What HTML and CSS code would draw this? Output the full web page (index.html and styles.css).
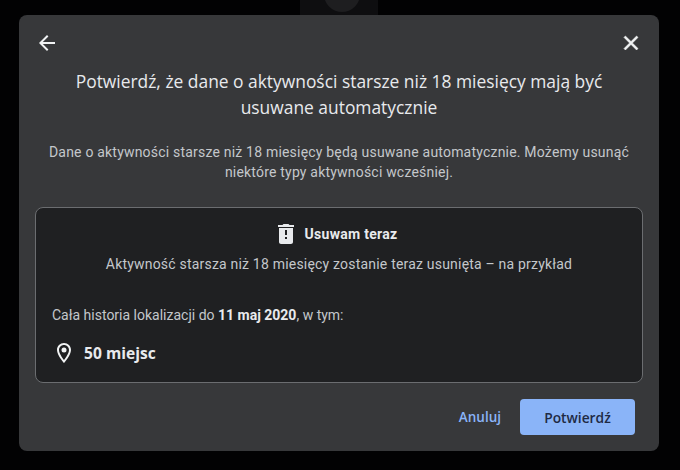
FILE: index.html
```html
<!DOCTYPE html>
<html lang="pl">
<head>
    <meta charset="UTF-8">
    <title>Potwierdź</title>
    <link rel="stylesheet" href="styles.css">
</head>
<body>

<div class="backdrop"><div class="backdrop-dot"></div></div>

<div class="dialog">
    <div class="top-bar">
        <svg class="top-icon" viewBox="0 0 24 24"><path d="M20 11H7.830l5.590-5.590L12 4l-8 8 8 8 1.410-1.410L7.830 13H20v-2z"/></svg>
        <svg class="top-icon" viewBox="0 0 24 24"><path d="M19 6.410L17.590 5 12 10.590 6.410 5 5 6.410 10.590 12 5 17.590 6.410 19 12 13.410 17.590 19 19 17.590 13.410 12z" stroke="#f1f3f4" stroke-width=".6"/></svg>
    </div>
    <h1 class="title">Potwierdź, że dane o aktywności starsze niż 18 miesięcy mają być usuwane automatycznie</h1>
    <p class="intro">Dane o aktywności starsze niż 18 miesięcy będą usuwane automatycznie. Możemy usunąć niektóre typy aktywności wcześniej.</p>

    <div class="card">
        <div class="card-head">
            <svg class="trash" viewBox="0 0 24 24"><path d="M15.500 3l-1-1h-5l-1 1H4v2h16V3h-4.500zM5 6v14c0 1.100.9 2 2 2h10c1.100 0 2-.9 2-2V6H5zm8 11h-2v-2h2v2zm0-4h-2V8h2v5z"/></svg>
            <span>Usuwam teraz</span>
        </div>
        <div class="card-sub">Aktywność starsza niż 18 miesięcy zostanie teraz usunięta – na przykład</div>
        <div class="history">Cała historia lokalizacji do <b>11 maj 2020</b>, w tym:</div>
        <div class="place">
            <svg class="pin" viewBox="0 0 24 24"><path d="M12 2C8.130 2 5 5.130 5 9c0 5.250 7 13 7 13s7-7.750 7-13c0-3.870-3.130-7-7-7zm0 17.000C9.900 16.300 7 12 7 9c0-2.760 2.240-5 5-5s5 2.240 5 5c0 3-2.900 7.300-5 10z"/><circle cx="12" cy="9" r="2.500"/></svg>
            <span>50 miejsc</span>
        </div>
    </div>

    <div class="actions">
        <span class="cancel">Anuluj</span>
        <span class="confirm">Potwierdź</span>
    </div>
</div>

</body>
</html>
```

FILE: styles.css
```css
html, body {
    margin: 0;
    height: 100%;
}
body {
    background-color: #020203;
    font-family: Roboto, "Liberation Sans", sans-serif;
    padding: 15px 21px 19px 19px;
    box-sizing: border-box;
    position: relative;
}
/* what shows of the page behind the dialog */
.backdrop {
    position: absolute;
    top: 0;
    left: 300px;
    width: 78px;
    height: 15px;
    background-color: #0e0e10;
    overflow: hidden;
}
.backdrop-dot {
    width: 36px;
    height: 36px;
    margin: -24px 0 0 24px;
    border-radius: 50%;
    background-color: #1e1e20;
}
.dialog {
    position: relative;
    height: 436px;
    box-sizing: border-box;
    background-color: #37383a;
    border-radius: 8px;
    padding: 16px 16px 0;
    display: flex;
    flex-direction: column;
}
.top-bar {
    display: flex;
    justify-content: space-between;
    height: 24px;
}
.top-icon {
    width: 24px;
    height: 24px;
    fill: #f1f3f4;
}
.title {
    margin: 13px 0 0;
    padding: 0 40px;
    font-family: "Open Sans", sans-serif;
    font-size: 17.4px;
    font-weight: 400;
    line-height: 26px;
    color: #e8eaed;
    text-align: center;
}
.intro {
    margin: 22px 0 0;
    padding: 0 8px;
    font-size: 14px;
    letter-spacing: .2px;
    line-height: 20px;
    color: #c4c7cb;
    text-align: center;
}
.card {
    margin-top: 25px;
    height: 176px;
    box-sizing: border-box;
    background-color: #1f2022;
    border: 1px solid #6b6d70;
    border-radius: 8px;
    padding: 15px 16px 0;
}
.card-head {
    display: flex;
    justify-content: center;
    align-items: center;
    gap: 6px;
    padding-right: 6px;
    font-size: 14px;
    font-weight: 700;
    letter-spacing: .3px;
    color: #e8eaed;
    height: 22px;
}
.trash {
    width: 24px;
    height: 24px;
    fill: #e8eaed;
}
.card-sub {
    margin-top: 9px;
    font-size: 14px;
    letter-spacing: .2px;
    line-height: 20px;
    color: #c4c7cb;
    text-align: center;
}
.history {
    margin-top: 31px;
    font-size: 14px;
    line-height: 20px;
    color: #c4c7cb;
}
.history b {
    color: #e8eaed;
}
.place {
    margin-top: 16px;
    display: flex;
    align-items: center;
    gap: 8px;
    font-family: "Open Sans", sans-serif;
    font-size: 15.6px;
    font-weight: 700;
    color: #e8eaed;
}
.pin {
    width: 24px;
    height: 24px;
    fill: #f1f3f4;
}
.actions {
    margin-top: 16px;
    display: flex;
    justify-content: flex-end;
    align-items: center;
    gap: 19px;
    padding-right: 8px;
}
.cancel {
    font-family: "Open Sans", sans-serif;
    font-size: 13.5px;
    font-weight: 600;
    color: #8ab4f8;
}
.confirm {
    width: 115px;
    height: 36px;
    display: flex;
    align-items: center;
    justify-content: center;
    background-color: #8ab4f8;
    border-radius: 4px;
    font-family: "Open Sans", sans-serif;
    font-size: 13.8px;
    font-weight: 600;
    color: #1f2a44;
}
```
